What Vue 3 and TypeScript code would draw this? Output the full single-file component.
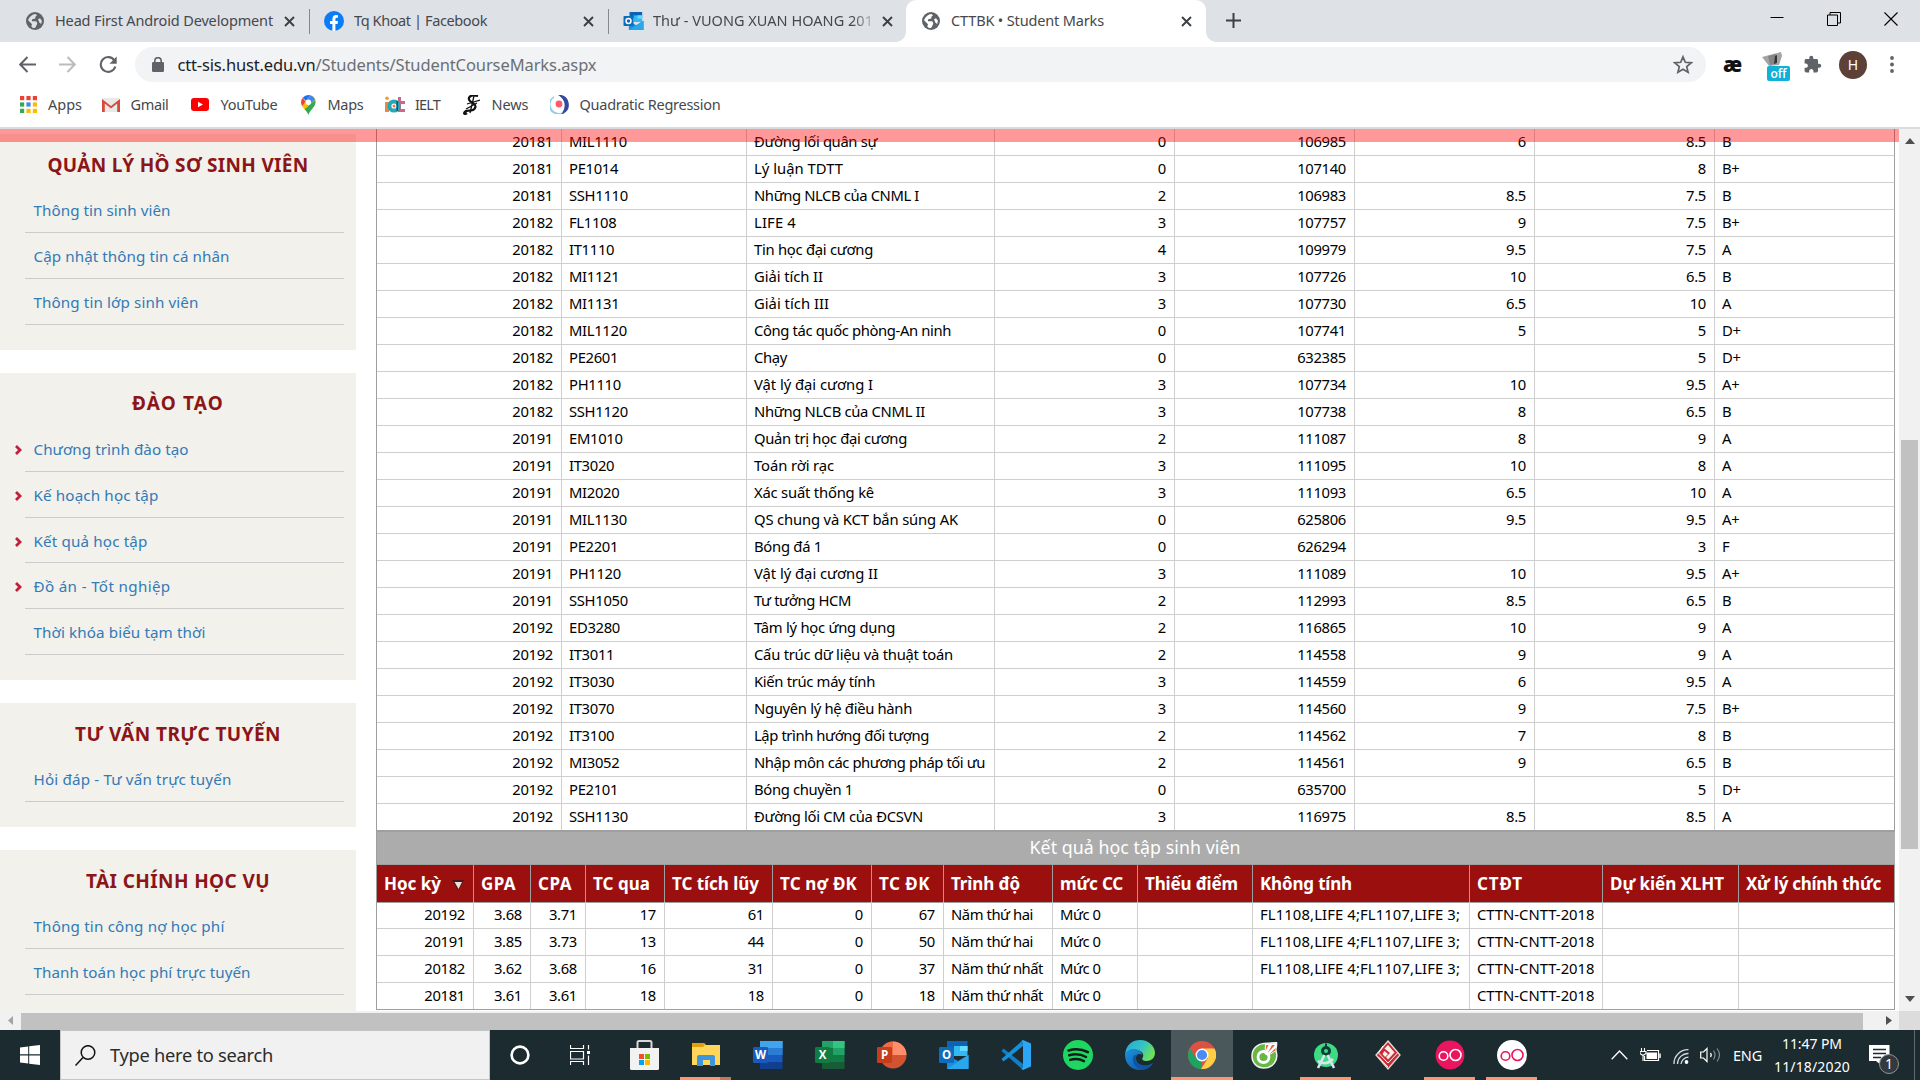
<script setup lang="ts">
type Row = [string, string, string, string, string, string, string, string]

interface MenuItem { text: string; w: number; arrow?: boolean }
interface MenuBox { title: string; w: number; items: MenuItem[] }

/* Spreads or tightens the tracking of a label so that it takes the given width. */
const vFit = {
  mounted(el: HTMLElement, binding: { value: number | undefined }) {
    if (!binding.value) return
    el.style.letterSpacing = '0px'
    const natural = el.getBoundingClientRect().width
    const count = Array.from((el.textContent ?? '').trim()).length
    if (count > 0) el.style.letterSpacing = `${(binding.value - natural) / count}px`
  },
}

const menus: MenuBox[] = [
  {
    title: 'QUẢN LÝ HỒ SƠ SINH VIÊN', w: 261,
    items: [
      { text: 'Thông tin sinh viên', w: 137 },
      { text: 'Cập nhật thông tin cá nhân', w: 196 },
      { text: 'Thông tin lớp sinh viên', w: 165 },
    ],
  },
  {
    title: 'ĐÀO TẠO', w: 92,
    items: [
      { text: 'Chương trình đào tạo', w: 155, arrow: true },
      { text: 'Kế hoạch học tập', w: 125, arrow: true },
      { text: 'Kết quả học tập', w: 114, arrow: true },
      { text: 'Đồ án - Tốt nghiệp', w: 137, arrow: true },
      { text: 'Thời khóa biểu tạm thời', w: 172 },
    ],
  },
  { title: 'TƯ VẤN TRỰC TUYẾN', w: 206, items: [{ text: 'Hỏi đáp - Tư vấn trực tuyến', w: 198 }] },
  {
    title: 'TÀI CHÍNH HỌC VỤ', w: 184,
    items: [
      { text: 'Thông tin công nợ học phí', w: 191 },
      { text: 'Thanh toán học phí trực tuyến', w: 217 },
    ],
  },
]

const marks: Row[] = [
  ['20181', 'MIL1110', 'Đường lối quân sự', '0', '106985', '6', '8.5', 'B'],
  ['20181', 'PE1014', 'Lý luận TDTT', '0', '107140', '', '8', 'B+'],
  ['20181', 'SSH1110', 'Những NLCB của CNML I', '2', '106983', '8.5', '7.5', 'B'],
  ['20182', 'FL1108', 'LIFE 4', '3', '107757', '9', '7.5', 'B+'],
  ['20182', 'IT1110', 'Tin học đại cương', '4', '109979', '9.5', '7.5', 'A'],
  ['20182', 'MI1121', 'Giải tích II', '3', '107726', '10', '6.5', 'B'],
  ['20182', 'MI1131', 'Giải tích III', '3', '107730', '6.5', '10', 'A'],
  ['20182', 'MIL1120', 'Công tác quốc phòng-An ninh', '0', '107741', '5', '5', 'D+'],
  ['20182', 'PE2601', 'Chạy', '0', '632385', '', '5', 'D+'],
  ['20182', 'PH1110', 'Vật lý đại cương I', '3', '107734', '10', '9.5', 'A+'],
  ['20182', 'SSH1120', 'Những NLCB của CNML II', '3', '107738', '8', '6.5', 'B'],
  ['20191', 'EM1010', 'Quản trị học đại cương', '2', '111087', '8', '9', 'A'],
  ['20191', 'IT3020', 'Toán rời rạc', '3', '111095', '10', '8', 'A'],
  ['20191', 'MI2020', 'Xác suất thống kê', '3', '111093', '6.5', '10', 'A'],
  ['20191', 'MIL1130', 'QS chung và KCT bắn súng AK', '0', '625806', '9.5', '9.5', 'A+'],
  ['20191', 'PE2201', 'Bóng đá 1', '0', '626294', '', '3', 'F'],
  ['20191', 'PH1120', 'Vật lý đại cương II', '3', '111089', '10', '9.5', 'A+'],
  ['20191', 'SSH1050', 'Tư tưởng HCM', '2', '112993', '8.5', '6.5', 'B'],
  ['20192', 'ED3280', 'Tâm lý học ứng dụng', '2', '116865', '10', '9', 'A'],
  ['20192', 'IT3011', 'Cấu trúc dữ liệu và thuật toán', '2', '114558', '9', '9', 'A'],
  ['20192', 'IT3030', 'Kiến trúc máy tính', '3', '114559', '6', '9.5', 'A'],
  ['20192', 'IT3070', 'Nguyên lý hệ điều hành', '3', '114560', '9', '7.5', 'B+'],
  ['20192', 'IT3100', 'Lập trình hướng đối tượng', '2', '114562', '7', '8', 'B'],
  ['20192', 'MI3052', 'Nhập môn các phương pháp tối ưu', '2', '114561', '9', '6.5', 'B'],
  ['20192', 'PE2101', 'Bóng chuyền 1', '0', '635700', '', '5', 'D+'],
  ['20192', 'SSH1130', 'Đường lối CM của ĐCSVN', '3', '116975', '8.5', '8.5', 'A'],
]
const nameWidths = [
  123, 89, 165, 42, 119, 69, 75, 197, 33, 119, 171, 153, 80, 120,
  204, 68, 124, 97, 141, 199, 121, 158, 175, 231, 99, 169,
]
const marksLeft = [false, true, true, false, false, false, false, true]

const heads: { text: string; w: number }[] = [
  { text: 'Học kỳ', w: 57 }, { text: 'GPA', w: 35 }, { text: 'CPA', w: 34 }, { text: 'TC qua', w: 57 },
  { text: 'TC tích lũy', w: 87 }, { text: 'TC nợ ĐK', w: 77 }, { text: 'TC ĐK', w: 51 }, { text: 'Trình độ', w: 69 },
  { text: 'mức CC', w: 63 }, { text: 'Thiếu điểm', w: 93 }, { text: 'Không tính', w: 92 }, { text: 'CTĐT', w: 46 },
  { text: 'Dự kiến XLHT', w: 114 }, { text: 'Xử lý chính thức', w: 135 },
]
const failed = 'FL1108,LIFE 4;FL1107,LIFE 3;'
const program = 'CTTN-CNTT-2018'
const results: string[][] = [
  ['20192', '3.68', '3.71', '17', '61', '0', '67', 'Năm thứ hai', 'Mức 0', '', failed, program, '', ''],
  ['20191', '3.85', '3.73', '13', '44', '0', '50', 'Năm thứ hai', 'Mức 0', '', failed, program, '', ''],
  ['20182', '3.62', '3.68', '16', '31', '0', '37', 'Năm thứ nhất', 'Mức 0', '', failed, program, '', ''],
  ['20181', '3.61', '3.61', '18', '18', '0', '18', 'Năm thứ nhất', 'Mức 0', '', '', program, '', ''],
]
const resultWidths: Record<string, number> = {
  [failed]: 200, [program]: 117.5, 'Năm thứ hai': 82, 'Năm thứ nhất': 92, 'Mức 0': 40.5,
}
const dots = [0, 1, 2, 3, 4, 5, 6, 7, 8]
const dotColors = ['#ea4335', '#ea4335', '#ea4335', '#34a853', '#4285f4', '#fbbc05', '#34a853', '#fbbc05', '#fbbc05']
const office = [
  { k: 'W', a: '#41a5ee', b: '#2b7cd3', c: '#185abd', d: '#103f91', p: '#185abd' },
  { k: 'X', a: '#21a366', b: '#33c481', c: '#107c41', d: '#185c37', p: '#107c41' },
]
</script>

<template>
  <div class="screen">
    <div class="tabs">
      <div class="tab t1">
        <svg class="ico" width="18" height="18" viewBox="0 0 18 18"><circle cx="9" cy="9" r="9" fill="#5f6368" /><path d="M2 8.2C3.400 4.500 6 2.200 9.600 1.900L11 3.600L9.500 4.600L9.300 6.600L6.200 7.300L5.800 9.200H10.200L11.300 11.200L10.400 13.800L9 15.900C5.500 15.900 4.800 14.800 6 12.200L3.800 9.900ZM12 7.300L14 6.200L15.900 8.800L15.200 12L13.300 10.400Z" fill="#dee1e6" /></svg>
        <span class="tt"><span v-fit="218">Head First Android Development</span></span>
        <svg class="x" width="11" height="11" viewBox="0 0 11 11"><path d="M1 1L10 10M10 1L1 10" stroke="#3c4043" stroke-width="1.9" /></svg>
      </div>
      <i class="sep"></i>
      <div class="tab t2">
        <svg class="ico" width="20" height="20" viewBox="0 0 20 20"><circle cx="10" cy="10" r="10" fill="#0a7cf5" /><path d="M8.400 20V12.900H6V10H8.400V7.900C8.400 5.300 9.900 4 12 4L14 4.200V6.700H12.800C11.700 6.700 11.400 7.300 11.400 8.100V10H14L13.600 12.900H11.400V20Z" fill="#fff" /></svg>
        <span class="tt"><span v-fit="133">Tq Khoat | Facebook</span></span>
        <svg class="x" width="11" height="11" viewBox="0 0 11 11"><path d="M1 1L10 10M10 1L1 10" stroke="#3c4043" stroke-width="1.9" /></svg>
      </div>
      <i class="sep"></i>
      <div class="tab t3">
        <svg class="ico" width="21" height="18" viewBox="0 0 30 27"><path d="M9 0H28V9H9Z" fill="#0a64b4" /><path d="M15 5H28V15H15Z" fill="#35b8f1" /><path d="M21 5H28V10H21Z" fill="#64dcff" /><path d="M8 13L19 20L30 13V27H8Z" fill="#1a8fe0" /><path d="M8 27L30 13V27Z" fill="#28a8ea" /><rect y="6" width="15" height="15" rx="1" fill="#0f6cbd" /><circle cx="7.500" cy="13.500" r="3.700" fill="none" stroke="#fff" stroke-width="2.200" /></svg>
        <span class="tt fade"><span v-fit="220">Thư - VUONG XUAN HOANG 201</span></span>
        <svg class="x" width="11" height="11" viewBox="0 0 11 11"><path d="M1 1L10 10M10 1L1 10" stroke="#3c4043" stroke-width="1.9" /></svg>
      </div>
      <div class="tab active">
        <svg class="ico" width="18" height="18" viewBox="0 0 18 18"><circle cx="9" cy="9" r="9" fill="#5f6368" /><path d="M2 8.2C3.400 4.500 6 2.200 9.600 1.900L11 3.600L9.500 4.600L9.300 6.600L6.200 7.300L5.800 9.200H10.200L11.300 11.200L10.400 13.800L9 15.900C5.500 15.900 4.800 14.800 6 12.200L3.800 9.900ZM12 7.300L14 6.200L15.900 8.800L15.200 12L13.300 10.400Z" fill="#fff" /></svg>
        <span class="tt"><span v-fit="153">CTTBK • Student Marks</span></span>
        <svg class="x" width="11" height="11" viewBox="0 0 11 11"><path d="M1 1L10 10M10 1L1 10" stroke="#3c4043" stroke-width="1.9" /></svg>
      </div>
      <svg class="plus" width="15" height="15" viewBox="0 0 15 15"><path d="M7.500 0V15M0 7.500H15" stroke="#3c4043" stroke-width="2" /></svg>
      <div class="winbtns">
        <svg width="14" height="14" viewBox="0 0 14 14"><path d="M0.500 5.500H13.500" stroke="#000" /></svg>
        <svg width="14" height="14" viewBox="0 0 14 14"><path d="M0.500 3H10.500V13.500H0.500ZM3 3V0.500H13.500V11H10.500" fill="none" stroke="#000" /></svg>
        <svg width="14" height="14" viewBox="0 0 14 14"><path d="M0.500 0.500L13.500 13.500M13.500 0.500L0.500 13.500" stroke="#000" stroke-width="1.100" /></svg>
      </div>
    </div>

    <div class="toolbar">
      <svg class="nav" width="17" height="17" viewBox="0 0 17 17"><path d="M17 8.500H1.500M8.500 1L1.200 8.500L8.500 16" fill="none" stroke="#5f6368" stroke-width="2" /></svg>
      <svg class="nav" width="17" height="17" viewBox="0 0 17 17"><path d="M0 8.500H15.500M8.500 1L15.800 8.500L8.500 16" fill="none" stroke="#babcbe" stroke-width="2" /></svg>
      <svg class="nav" width="18" height="18" viewBox="0 0 18 18"><path d="M15.300 4.300A7.400 7.400 0 1 0 16.300 10.500" fill="none" stroke="#5f6368" stroke-width="2.100" /><path d="M17.700 0.500V7.700H10.500Z" fill="#5f6368" /></svg>
      <div class="omni">
        <svg width="12" height="15" viewBox="0 0 12 15"><rect y="5" width="12" height="10" rx="1.200" fill="#5f6368" /><path d="M2.800 6V3.800A3.200 3.200 0 0 1 9.200 3.800V6" fill="none" stroke="#5f6368" stroke-width="1.600" /></svg>
        <span class="url"><span v-fit="138" class="host">ctt-sis.hust.edu.vn</span><span v-fit="281">/Students/StudentCourseMarks.aspx</span></span>
        <svg class="star" width="20" height="19" viewBox="0 0 20 19"><path d="M10 1.800L12.300 7.300L18.200 7.800L13.700 11.600L15.100 17.300L10 14.300L4.900 17.300L6.300 11.600L1.800 7.800L7.700 7.300Z" fill="none" stroke="#5f6368" stroke-width="1.700" /></svg>
      </div>
      <span class="ae"><span v-fit="18.5">æ</span></span>
      <div class="ext">
        <svg width="22" height="15" viewBox="0 0 22 15"><path d="M0 5L19 0L20 4L17 13L7 14Z" fill="#a4a4a4" /><path d="M6 4L14 2L13 12L8 13Z" fill="#858585" /><path d="M13 4L15 3V11L12 12Z" fill="#333" /></svg>
        <span class="off">off</span>
      </div>
      <svg class="puzzle" width="19" height="19" viewBox="0 0 24 24"><path d="M20.500 11H19V7c0-1.100-.9-2-2-2h-4V3.500C13 2.120 11.880 1 10.500 1S8 2.120 8 3.500V5H4c-1.100 0-1.990.9-1.990 2v3.800H3.500c1.490 0 2.700 1.210 2.700 2.700s-1.210 2.700-2.700 2.700H2V20c0 1.100.9 2 2 2h3.800v-1.500c0-1.490 1.210-2.700 2.700-2.700 1.490 0 2.700 1.210 2.700 2.700V22H17c1.100 0 2-.9 2-2v-4h1.500c1.380 0 2.500-1.120 2.500-2.500S21.880 11 20.500 11z" fill="#5f6368" /></svg>
      <span class="avatar">H</span>
      <svg class="more" width="4" height="17" viewBox="0 0 4 17"><circle cx="2" cy="2" r="1.900" fill="#5f6368" /><circle cx="2" cy="8.500" r="1.900" fill="#5f6368" /><circle cx="2" cy="15" r="1.900" fill="#5f6368" /></svg>
    </div>

    <div class="bookmarks">
      <div class="bm b1"><svg width="17" height="17" viewBox="0 0 17 17"><rect v-for="d in dots" :key="d" :x="(d % 3) * 6.4" :y="Math.floor(d / 3) * 6.4" width="4.200" height="4.200" :fill="dotColors[d]" /></svg><span v-fit="34">Apps</span></div>
      <div class="bm b2"><svg width="18" height="14" viewBox="0 0 18 14"><rect width="18" height="14" rx="1.500" fill="#e9e9e9" /><path d="M0 14V1L9 8L18 1V14H15.200V5.500L9 10.500L2.800 5.500V14Z" fill="#d54b3d" /></svg><span v-fit="38">Gmail</span></div>
      <div class="bm b3"><svg width="18" height="13" viewBox="0 0 18 13"><rect width="18" height="13" rx="3" fill="#f00" /><path d="M7 3.700V9.300L12 6.500Z" fill="#fff" /></svg><span v-fit="57">YouTube</span></div>
      <div class="bm b4"><svg width="15" height="20" viewBox="0 0 15 20"><path d="M7.500 0A7.300 7.300 0 0 0 1.700 2.800L5 6L9.500 0.400Z" fill="#1a73e8" /><path d="M1.700 2.800A7.300 7.300 0 0 0 1.300 11.200L5.200 7.500Z" fill="#ea4335" /><path d="M9.500 0.300L4.500 6.200L1.300 11.200L3.500 14.300L14.300 4.800C13.400 2.600 11.700 1 9.500 0.300Z" fill="#fbbc04" /><path d="M9.500 0.300A7.300 7.300 0 0 1 14 4.300L9.500 8.500L5.500 5Z" fill="#4285f4" /><path d="M14.200 4.800C16.200 11.500 9 14 7.500 20C6.500 17.500 5 15.700 3.500 14.300Z" fill="#34a853" /><circle cx="7.400" cy="7.200" r="2.700" fill="#fff" /></svg><span v-fit="36">Maps</span></div>
      <div class="bm b5"><svg width="20" height="17" viewBox="0 0 20 17"><path d="M0 6H4V16H0Z" fill="#e58a4a" /><circle cx="2" cy="2.300" r="1.800" fill="#e9a03a" /><path d="M13 1H16V5H20V8H16V13H20V16H13Z" fill="#c96a84" /><circle cx="9" cy="10" r="4.600" fill="#fff" stroke="#28a7b7" stroke-width="4" /><path d="M13 5V15H11.500V5Z" fill="#1d4f6b" /><circle cx="9" cy="10" r="1.500" fill="#f07c3c" /></svg><span v-fit="25">IELT</span></div>
      <div class="bm b6"><svg width="17" height="20" viewBox="0 0 17 20"><path d="M15 1C7-1 4 3 7 6C10 9 14 9 12 13C10 17 5 15 3 16C0 18 1 20 4 18" fill="none" stroke="#111" stroke-width="2.300" /><path d="M17 5L4 9M14 8L3 14M11 1L7 18" stroke="#111" stroke-width="1.300" /></svg><span v-fit="37">News</span></div>
      <div class="bm b7"><svg width="20" height="19" viewBox="0 0 20 19"><path d="M4 2A9 9 0 0 0 12 18A8 8 0 0 1 4 2Z" fill="#8fcdec" stroke="#8fcdec" stroke-width="1.300" /><path d="M10 0.500A9.300 9.300 0 0 1 13 18C17 12 16 5 10 0.500Z" fill="#34499c" stroke="#34499c" stroke-width="1.500" /><circle cx="9" cy="9" r="3.400" fill="#ff5a67" /></svg><span v-fit="141">Quadratic Regression</span></div>
    </div>

    <div class="page">
      <div class="banner"></div>
      <aside class="side">
        <section v-for="m in menus" :key="m.title" class="box">
          <h3><span v-fit="m.w">{{ m.title }}</span></h3>
          <ul>
            <li v-for="i in m.items" :key="i.text">
              <svg v-if="i.arrow" class="chev" width="7" height="10" viewBox="0 0 7 10"><path d="M1 1L5 5L1 9" fill="none" stroke="#c01f3a" stroke-width="2.800" /></svg>
              <span v-fit="i.w">{{ i.text }}</span>
            </li>
          </ul>
        </section>
      </aside>

      <main class="grid">
        <div v-for="(r, n) in marks" :key="n" class="row marks">
          <div v-for="(c, k) in r" :key="k" class="cell" :class="{ l: marksLeft[k] }"><span v-fit="k === 2 ? nameWidths[n] : undefined">{{ c }}</span></div>
        </div>
        <div class="caption"><span v-fit="211">Kết quả học tập sinh viên</span></div>
        <div class="row res head">
          <div v-for="h in heads" :key="h.text" class="cell l">
            <span v-fit="h.w">{{ h.text }}</span>
            <svg v-if="h.text === 'Học kỳ'" class="sort" width="12" height="10" viewBox="0 0 12 10"><path d="M0 0H12L6 10Z" fill="#4c1616" /><path d="M2.500 2H10L6.500 9Z" fill="#e8e0e0" /></svg>
          </div>
        </div>
        <div v-for="(r, n) in results" :key="'r' + n" class="row res">
          <div v-for="(c, k) in r" :key="k" class="cell" :class="{ l: k > 6 }"><span v-fit="resultWidths[c]">{{ c }}</span></div>
        </div>
      </main>

      <div class="vbar">
        <svg width="10" height="6" viewBox="0 0 10 6"><path d="M0 6L5 0L10 6Z" fill="#505050" /></svg>
        <div class="vthumb"></div>
        <svg class="down" width="10" height="6" viewBox="0 0 10 6"><path d="M0 0L5 6L10 0Z" fill="#505050" /></svg>
      </div>
    </div>
    <div class="hbar">
      <svg width="5" height="9" viewBox="0 0 5 9"><path d="M5 0V9L0 4.500Z" fill="#a3a3a3" /></svg>
      <div class="hthumb"></div>
      <svg class="right" width="6" height="9" viewBox="0 0 6 9"><path d="M0 0V9L6 4.500Z" fill="#505050" /></svg>
      <div class="corner"></div>
    </div>

    <div class="taskbar">
      <div class="start"><svg width="20" height="20" viewBox="0 0 20 20"><path d="M0 2.600L8.200 1.400V9.300H0ZM9.200 1.200L20 0V9.300H9.200ZM0 10.400H8.200V18.500L0 17.400ZM9.200 10.400H20V20L9.200 18.700Z" fill="#fff" /></svg></div>
      <div class="search">
        <svg width="21" height="21" viewBox="0 0 21 21"><circle cx="13" cy="7.500" r="6.800" fill="none" stroke="#111" stroke-width="1.500" /><path d="M8 12.500L0.500 20.500" stroke="#111" stroke-width="1.500" /></svg>
        <span v-fit="163">Type here to search</span>
      </div>
      <div class="app sm"><svg width="20" height="20" viewBox="0 0 20 20"><circle cx="10" cy="10" r="8.400" fill="none" stroke="#fff" stroke-width="2.600" /></svg></div>
      <div class="app sm"><svg width="21" height="20" viewBox="0 0 21 20"><path d="M0.500 0V3.500H13.500V0M0.500 6.500H13.500V14H0.500ZM0.500 20V16.500H13.500V20M18.500 0V4.500M18.500 10.500V20" fill="none" stroke="#fff" stroke-width="1.200" /><rect x="17" y="6" width="3" height="3" fill="#fff" /></svg></div>
      <div class="app first"><svg width="29" height="30" viewBox="0 0 29 30"><path d="M7.500 9V2.500C7.500 1.500 8 1 9 1H20C21 1 21.500 1.500 21.500 2.500V9" fill="none" stroke="#d8d8d8" stroke-width="2" /><path d="M0 8H29V28.500Q29 30 27.500 30H1.500Q0 30 0 28.500Z" fill="#f2f2f2" /><path d="M9 14H14V19H9Z" fill="#f25022" /><path d="M15 14H20V19H15Z" fill="#7fba00" /><path d="M9 20H14V25H9Z" fill="#00a4ef" /><path d="M15 20H20V25H15Z" fill="#ffb900" /></svg></div>
      <div class="app"><svg width="28" height="24" viewBox="0 0 28 24"><path d="M0 0H12L14 2H28V22H0Z" fill="#ffd55a" /><path d="M0 0H12L13 2L11 4H0Z" fill="#e1a008" /><path d="M5 23V14Q5 12 7 12H21Q23 12 23 14V23H18V17H11V23Z" fill="#3d95dc" /></svg><i class="under exp"></i><i class="under exp2"></i></div>
      <div v-for="o in office" :key="o.k" class="app"><svg width="30" height="28" viewBox="0 0 30 28"><path d="M7 0H29.500V7H7Z" :fill="o.a" /><path d="M18 0H29.500V7H18Z" :fill="o.k === 'X' ? o.b : o.a" /><path d="M7 7H29.500V14H7Z" :fill="o.k === 'X' ? o.c : o.b" /><path d="M7 14H29.500V21H7Z" :fill="o.c" /><path d="M18 7H29.500V14H18Z" :fill="o.k === 'X' ? o.a : o.b" /><path d="M7 21H29.500V28H7Z" :fill="o.d" /><rect y="6" width="15" height="16" rx="1.300" :fill="o.p" /><text x="7.500" y="18" text-anchor="middle" class="ot">{{ o.k }}</text></svg></div>
      <div class="app"><svg width="30" height="28" viewBox="0 0 30 28"><circle cx="16" cy="14" r="13.500" fill="#d35230" /><path d="M16 0.500A13.500 13.500 0 0 1 29.500 14H16Z" fill="#ff8f6b" /><path d="M16 0.500V14H2.500A13.500 13.500 0 0 1 16 0.500Z" fill="#ed6c47" /><rect y="6" width="15" height="16" rx="1.300" fill="#c43e1c" /><text x="7.500" y="18" text-anchor="middle" class="ot">P</text></svg></div>
      <div class="app"><svg width="30" height="28" viewBox="0 0 30 28"><path d="M8 0H28.500V9H8Z" fill="#0a64b4" /><path d="M15 5H28.500V15H15Z" fill="#35b8f1" /><path d="M21 5H28.500V10H21Z" fill="#64dcff" /><path d="M8 14L19 20L29.500 14V28H8Z" fill="#1a8fe0" /><path d="M8 28L29.500 14V28Z" fill="#28a8ea" /><rect y="6" width="15" height="16" rx="1.300" fill="#0f6cbd" /><text x="7.500" y="18" text-anchor="middle" class="ot">O</text></svg></div>
      <div class="app"><svg width="30" height="30" viewBox="0 0 30 30"><path d="M2.500 8.500L22 24L21.500 29.500L0.500 11Z" fill="#0f7fc9" /><path d="M2.500 21.500L22 6L21.500 0.500L0.500 19Z" fill="#1591dc" /><path d="M22 0L30 3.500V26.500L22 30L20.500 29L22 27V3L20.500 1Z" fill="#2ba7f5" /></svg></div>
      <div class="app"><svg width="30" height="30" viewBox="0 0 30 30"><circle cx="15" cy="15" r="15" fill="#1ed760" /><path d="M5.500 10.500C12 8.500 19 9 25 12.200M6.300 15.300C12 13.700 18 14.300 23 17M7.200 19.900C12 18.600 17 19 21 21.200" fill="none" stroke="#111c18" stroke-width="2.500" stroke-linecap="round" /></svg></div>
      <div class="app"><svg width="30" height="30" viewBox="0 0 30 30"><defs><linearGradient id="eg" x1="0" y1="0" x2="1" y2=".4"><stop offset="0" stop-color="#2aa7dc" /><stop offset=".6" stop-color="#35c3c3" /><stop offset="1" stop-color="#6be05a" /></linearGradient><linearGradient id="eb" x1="0" y1="0" x2="1" y2="1"><stop offset="0" stop-color="#1c93de" /><stop offset="1" stop-color="#0f4f9c" /></linearGradient></defs><path d="M0.300 13C1.500 4 8 0 15 0C24 0 30 6.500 30 13C30 18 26 21 21.500 21C18 21 16.500 19.500 17.500 18C20 14 16 10 11 10C6 10 2 12 0.300 16Z" fill="url(#eg)" /><path d="M0 15C1 10 6 8.500 10 9C14 9.500 17 12 17 15C14 12.500 10.500 15 11 19C11.500 25 20 28 28 23C25 28 20 30 15 30C7 30 0 24 0 15Z" fill="url(#eb)" /><path d="M8 17C7 23 11 29 17 29.900C22 29.500 26 27 28 23C20 28 11.500 25 11 19C10.800 17 11.500 15.500 12.500 14.500C10.500 14.500 8.500 15.500 8 17Z" fill="#0f55a6" /></svg></div>
      <div class="app on"><svg width="28" height="28" viewBox="0 0 28 28"><circle cx="14" cy="14" r="14" fill="#dd5144" /><path d="M1.900 7L10 21L14 28A14 14 0 0 1 1.900 7Z" fill="#1da462" /><path d="M8.500 17L14 20L13 28A14 14 0 0 1 3 22.500Z" fill="#1da462" /><path d="M14 7.600H26.500A14 14 0 0 1 13 28L20 17Z" fill="#ffcd46" /><circle cx="14" cy="14" r="6.400" fill="#fff" /><circle cx="14" cy="14" r="5.100" fill="#4c8bf5" /></svg><i class="under full"></i></div>
      <div class="app"><svg width="27" height="27" viewBox="0 0 27 27"><path d="M13 1.500L25.500 0.700C26 4 24.500 6 25 9C28 18 22 26 13 26C6 26 1 21 1 14C1 7 6 2 13 1.500Z" fill="#69b546" stroke="#f0f5ee" stroke-width="1.500" /><circle cx="12.500" cy="15" r="5.500" fill="none" stroke="#fff" stroke-width="2.800" /><path d="M13.500 12L14 2L25 1.500L25 9L17 14Z" fill="#fff" /><path d="M14.500 9L15.200 3L17.500 3ZM16.800 11L21 3L24 3ZM18.500 12L24.500 6V8.500Z" fill="#ee6038" /></svg></div>
      <div class="app"><svg width="26" height="27" viewBox="0 0 26 27"><circle cx="13" cy="13" r="12" fill="#3ddc84" /><circle cx="13" cy="9" r="3.500" fill="none" stroke="#123b38" stroke-width="3" /><path d="M13 4V1.500" stroke="#123b38" stroke-width="2" /><path d="M11.500 13L5 26M14.500 13L21 26M5 19Q13 24 20 17" fill="none" stroke="#d6e6ef" stroke-width="2.600" /></svg><i class="under"></i></div>
      <div class="app"><svg width="26" height="30" viewBox="0 0 26 30"><path d="M13 1L25 15L13 29L1 15Z" fill="#c92c32" stroke="#e6dcdc" stroke-width="1.300" /><path d="M3.500 17L13 27M8 6L3.500 13L13 23L22.500 13" fill="none" stroke="#fff" stroke-width="1" /><path d="M13 5L19.500 12.500L13 19.500L11 17L15 13L9.500 8.500Z" fill="#f7eeee" /><path d="M9.500 11L13 14L10 17L7.500 14Z" fill="#f7eeee" /></svg></div>
      <div class="app"><svg width="30" height="30" viewBox="0 0 30 30"><circle cx="15" cy="15" r="14.400" fill="#e9155f" /><circle cx="8.500" cy="16" r="4.300" fill="none" stroke="#fff" stroke-width="1.600" /><circle cx="20.500" cy="15" r="5.500" fill="none" stroke="#fff" stroke-width="1.600" /></svg><i class="under"></i></div>
      <div class="app"><svg width="30" height="30" viewBox="0 0 30 30"><circle cx="15" cy="15" r="15" fill="#fff" /><circle cx="8.500" cy="16" r="4.300" fill="none" stroke="#e9155f" stroke-width="1.600" /><circle cx="20.500" cy="15" r="5.500" fill="none" stroke="#e9155f" stroke-width="1.600" /></svg><i class="under"></i></div>

      <div class="tray">
        <svg width="17" height="10" viewBox="0 0 17 10"><path d="M0.700 9.300L8.500 1L16.300 9.300" fill="none" stroke="#fff" stroke-width="1.300" /></svg>
        <svg class="bat" width="21" height="14" viewBox="0 0 21 14"><path d="M7 2.500H18.500V12.500H4.500V8" fill="none" stroke="#fff" stroke-width="1.200" /><rect x="6.500" y="4.500" width="10.500" height="6.500" fill="#fff" /><path d="M20 5.500V10" stroke="#fff" stroke-width="1.500" /><path d="M1.500 0V3M4.500 0V3M0 3.500H6V5.500L3 7.500L0 5.500ZM3 7V13" fill="none" stroke="#fff" stroke-width="1.100" /></svg>
        <svg class="wifi" width="16" height="15" viewBox="0 0 16 15"><path d="M1 15A14 14 0 0 1 15.500 0.700M4.500 15A10.500 10.500 0 0 1 15.500 4.500M8 15A7.500 7.500 0 0 1 15.500 8.200" fill="none" stroke="#d5dadb" stroke-width="1.300" /><circle cx="13.500" cy="13" r="1.900" fill="#fff" /></svg>
        <svg class="spk" width="21" height="16" viewBox="0 0 21 16"><path d="M0.700 5H3.500L7 1.500V14.500L3.500 11H0.700Z" fill="none" stroke="#fff" stroke-width="1.200" /><path d="M10.500 6Q12 8 10.500 10" fill="none" stroke="#fff" stroke-width="1.300" /><path d="M13.500 3.500Q16.500 8 13.500 12.500M17 1.500Q22 8 17 14.500" fill="none" stroke="#84908f" stroke-width="1.200" /></svg>
        <span class="eng"><span v-fit="29">ENG</span></span>
        <div class="clock"><div><span v-fit="60">11:47 PM</span></div><div><span v-fit="76">11/18/2020</span></div></div>
        <div class="note"><svg width="21" height="20" viewBox="0 0 21 20"><path d="M0 0H20.500V16H12V20L7 16H0Z" fill="#fff" /><path d="M4 4.500H17M4 8.500H17M4 12.500H12" stroke="#1b2b30" stroke-width="1.400" /></svg><span class="badge">1</span></div>
        <i class="peek"></i>
      </div>
    </div>
  </div>
</template>

<style>
html, body { margin: 0; padding: 0; overflow: hidden; }
</style>

<style scoped>
.screen { width: 1920px; height: 1080px; display: flex; flex-direction: column; overflow: hidden; background: #fff; font-family: "Noto Sans", "Open Sans", sans-serif; }
svg { display: block; flex: none; }
span { white-space: nowrap; }
i { display: block; }

.tabs { height: 42px; flex: none; background: #dee1e6; display: flex; align-items: stretch; font-size: 14.5px; color: #45484c; }
.tab { display: flex; align-items: center; box-sizing: border-box; }
.tab .ico { margin-right: 11px; }
.tt { flex: 1; display: block; overflow: hidden; line-height: 22px; height: 22px; margin-bottom: 2px; }
.fade { -webkit-mask-image: linear-gradient(90deg, #000 90%, transparent 102%); mask-image: linear-gradient(90deg, #000 90%, transparent 102%); }
.t1 { width: 309px; padding: 0 14px 0 26px; }
.t2 { width: 298px; padding: 0 14px 0 14px; }
.t2 .ico { margin-right: 10px; }
.t3 { width: 297px; padding: 0 13px 0 14px; }
.t3 .ico { margin-right: 9px; }
.t3 .x { margin-left: 8px; }
.sep { width: 1px; height: 25px; margin-top: 9px; background: #85888d; }
.active { position: relative; width: 300px; background: #fff; border-radius: 10px 10px 0 0; padding: 0 14px 0 16px; }
.active .ico { margin-right: 11px; }
.active::before, .active::after { content: ""; position: absolute; bottom: 0; width: 10px; height: 10px; }
.active::before { left: -10px; background: radial-gradient(circle at 0 0, transparent 9.5px, #fff 10px); }
.active::after { right: -10px; background: radial-gradient(circle at 100% 0, transparent 9.5px, #fff 10px); }
.plus { margin: 13px 0 0 20px; }
.winbtns { margin-left: auto; display: flex; gap: 43px; padding: 12px 22px 0 0; }

.toolbar { height: 45px; flex: none; display: flex; align-items: center; padding-left: 19px; }
.nav { margin-right: 24px; }
.nav:nth-child(2) { margin-right: 24px; margin-left: -1px; }
.nav:nth-child(3) { margin-right: 18px; margin-left: -1px; }
.omni { width: 1571px; height: 35px; box-sizing: border-box; border-radius: 18px; background: #f1f3f4; display: flex; align-items: center; padding: 0 13px 0 16.500px; }
.url { flex: 1; margin-left: 14px; font-size: 16.5px; line-height: 24px; color: #6b6f74; }
.host { color: #202124; }
.ae { width: 20px; margin-left: 17px; font: 800 20.5px/24px "Open Sans", sans-serif; color: #111; padding-bottom: 2px; }
.ext { position: relative; margin: -10px 0 0 19px; width: 22px; }
.off { position: absolute; left: 5px; top: 14px; width: 23px; height: 15px; border-radius: 2px; background: #10b0d8; color: #fff; font: 600 12px/15px "Open Sans", sans-serif; text-align: center; }
.puzzle { margin-left: 19px; }
.avatar { width: 28px; height: 28px; border-radius: 50%; background: #5d4037; color: #fff; font-size: 14px; line-height: 28px; text-align: center; margin-left: 17px; }
.more { margin-left: 23px; }

.bookmarks { flex: none; border-bottom: 2px solid #d9dbdf; display: flex; align-items: center; box-sizing: border-box; height: 42px; padding: 0 0 5px 19.500px; font-size: 14.5px; color: #45484c; }
.bm { display: flex; align-items: center; box-sizing: border-box; line-height: 20px; }
.bm span { margin-bottom: 2px; }
.b1 { width: 82px; gap: 11.500px; }
.b2 { width: 89px; gap: 11px; }
.b3 { width: 110px; gap: 12px; }
.b4 { width: 84px; gap: 12px; }
.b5 { width: 78px; gap: 10.500px; }
.b6 { width: 87px; gap: 12px; }
.b7 { gap: 10px; }

.page { position: relative; height: 882px; flex: none; display: flex; overflow: hidden; }
.banner { position: absolute; left: 0; top: 0; width: 1899px; height: 13px; background: rgba(255, 0, 0, .4); z-index: 2; }
.side { width: 376px; flex: none; padding-top: 5.300px; }
.box { width: 356px; background: #f2f1ec; margin-bottom: 23.200px; padding: 0 12px 25px 25px; box-sizing: border-box; }
h3 { margin: 0 -12px 0 -25px; height: 53.200px; padding-top: 13.500px; box-sizing: border-box; line-height: 34px; font-size: 19px; font-weight: 700; color: #8c1518; text-align: center; }
ul { list-style: none; margin: 0; padding: 0; }
li { position: relative; height: 45.750px; box-sizing: border-box; border-bottom: 1px solid #ccc; padding-left: 8.500px; padding-top: 8px; font-size: 15.200px; line-height: 30px; color: #337ab7; display: flex; }
.chev { position: absolute; left: -10px; top: 19px; }

.grid { width: 1518px; border-left: 1px solid #9f9f9f; flex: none; border-bottom: 1px solid #9f9f9f; box-sizing: content-box; margin-bottom: auto; height: 880px; font-size: 14.800px; color: #000; }
.row { display: grid; height: 27px; }
.marks { grid-template-columns: 185px 185px 248px 180px 180px 180px 180px 180px; }
.res { grid-template-columns: 97px 57px 55px 79px 108px 99px 72px 109px 85px 115px 217px 133px 136px 156px; }
.cell { box-sizing: border-box; border-right: 1px solid #cfcfcf; border-bottom: 1px solid #cfcfcf; padding: 0 8px; line-height: 24px; text-align: right; white-space: nowrap; letter-spacing: -.32px; }
.cell.l { text-align: left; padding: 0 0 0 7px; }
.cell:last-child { border-right-color: #9f9f9f; }
.caption { height: 35px; margin-top: -1px; position: relative; box-sizing: border-box; background: #acacac; border-top: 2px solid #9f9f9f; border-bottom: 1px solid #9f9f9f; color: #fff; font-size: 17.800px; line-height: 31px; text-align: center; padding-right: 2px; }
.head { height: 37px; background: #9b0f0f; color: #fff; font-size: 17px; font-weight: 700; }
.head .cell { border-color: #9f9f9f; line-height: 37px; display: flex; align-items: center; }
.sort { margin-left: 11px; margin-top: 3px; }
.row:last-child .cell { border-bottom: 0; height: 26px; }

.vbar { margin-left: 4px; width: 21px; background: #f1f1f1; display: flex; flex-direction: column; align-items: center; padding-top: 9px; box-sizing: border-box; }
.vthumb { width: 17px; height: 409px; margin-top: 296px; background: #c1c1c1; }
.down { margin-top: 147px; }
.hbar { height: 19px; flex: none; background: #f1f1f1; display: flex; align-items: center; padding-left: 8px; }
.hthumb { width: 1842px; height: 17px; margin: 2px 0 0 8px; background: #c1c1c1; }
.right { margin-left: 23px; }
.corner { margin-left: auto; width: 21px; height: 19px; background: #dcdcdc; }

.taskbar { height: 50px; flex: none; background: #1b2b30; display: flex; }
.start { width: 60px; display: flex; align-items: center; justify-content: center; }
.search { width: 430px; box-sizing: border-box; background: #f1f1f1; border: 1px solid #c3c5c6; display: flex; align-items: center; padding-left: 14px; font-size: 18.300px; color: #2b2b2b; gap: 14px; }
.search span { margin-bottom: 2px; }
.app { position: relative; width: 62px; display: flex; align-items: center; justify-content: center; }
.sm { width: 60px; }
.first { margin-left: 3px; }
.on { background: linear-gradient(90deg, transparent 0, transparent 1px, #4a575b 1px); margin-left: -1px; width: 63px; }
.under { position: absolute; left: 5px; bottom: 0; width: 51px; height: 3px; background: #ff9470; }
.under.full { left: 1px; width: 62px; }
.under.exp { width: 40px; }
.under.exp2 { left: 45px; width: 11px; background: #c97359; }
.ot { font: 700 11.500px "Open Sans", sans-serif; fill: #fff; }
.tray { display: flex; align-items: center; margin-left: auto; color: #fff; }
.bat { margin-left: 12px; }
.wifi { margin-left: 12px; margin-top: 2px; }
.spk { margin-left: 11px; }
.eng { margin-left: 12px; font-size: 14.500px; width: 29px; }
.clock { width: 80px; margin-left: 10px; text-align: center; font-size: 14px; line-height: 23px; margin-bottom: 1px; }
.note { position: relative; margin-left: 17px; width: 45px; height: 20px; }
.badge { position: absolute; left: 10px; top: 9px; border-radius: 50%; border: 1px solid #8d9597; background: #33393c; font-size: 14px; line-height: 18px; text-align: center; box-sizing: border-box; width: 20px; height: 20px; }
.peek { width: 1px; height: 50px; background: #5f6b6e; margin-right: 5px; }
</style>
